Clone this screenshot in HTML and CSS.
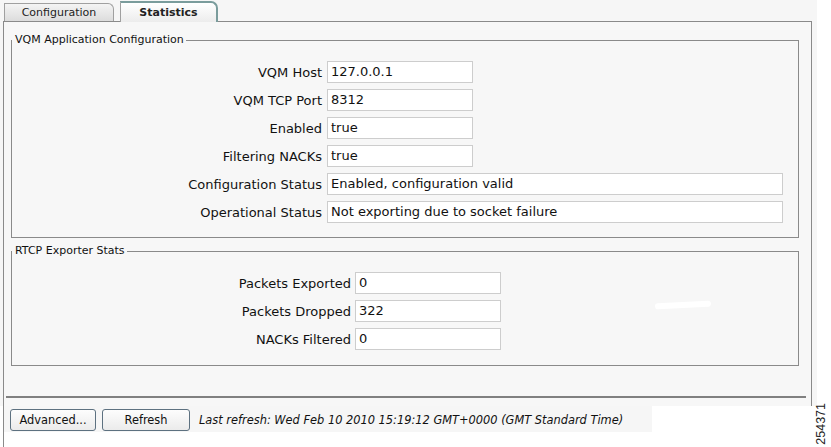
FILE: index.html
```
<!DOCTYPE html>
<html lang="en">
<head>
	<meta charset="UTF-8">
	<title>VQM Statistics</title>
	<link rel="stylesheet" href="styles.css">
</head>
<body>
	<div class="sheet">
		<div class="tabs">
			<div class="tab">Configuration</div>
			<div class="tab active">Statistics</div>
		</div>
		<div class="panel">
			<fieldset class="group vqm">
				<legend>VQM Application Configuration</legend>
				<div class="rows">
					<span class="lbl">VQM Host</span><span class="field">127.0.0.1</span>
					<span class="lbl">VQM TCP Port</span><span class="field">8312</span>
					<span class="lbl">Enabled</span><span class="field">true</span>
					<span class="lbl">Filtering NACKs</span><span class="field">true</span>
					<span class="lbl">Configuration Status</span><span class="field wide">Enabled, configuration valid</span>
					<span class="lbl">Operational Status</span><span class="field wide">Not exporting due to socket failure</span>
				</div>
			</fieldset>
			<fieldset class="group rtcp">
				<legend>RTCP Exporter Stats</legend>
				<div class="rows">
					<span class="lbl">Packets Exported</span><span class="field">0</span>
					<span class="lbl">Packets Dropped</span><span class="field">322</span>
					<span class="lbl">NACKs Filtered</span><span class="field">0</span>
				</div>
				<span class="smudge"></span>
			</fieldset>
			<div class="sep"></div>
		</div>
	</div>
	<div class="footer">
		<div class="bar">
			<button class="btn">Advanced...</button>
			<button class="btn">Refresh</button>
			<span class="last">Last refresh: Wed Feb 10 2010 15:19:12 GMT+0000 (GMT Standard Time)</span>
		</div>
	</div>
	<div class="figid">254371</div>
</body>
</html>
```

FILE: styles.css
```
*{
	margin: 0;
	padding: 0;
	box-sizing: border-box;
}
body{
	background: #fff;
	font-family: "DejaVu Sans", Verdana, sans-serif;
	font-size: 13px;
	color: #111;
	width: 831px;
	height: 447px;
	overflow: hidden;
	position: relative;
}
.sheet{
	background: #f6f6f6;
	width: 817px;
	height: 406px;
}
.tabs{
	display: flex;
	align-items: flex-end;
	height: 21px;
	padding-left: 4px;
	gap: 6px;
	font-size: 11px;
}
.tab{
	height: 18px;
	width: 110px;
	border: 1px solid #a0a0a0;
	border-bottom: none;
	border-top-right-radius: 6px;
	background: linear-gradient(#f4f4f4, #dcdcdc);
	text-align: center;
	line-height: 17px;
	color: #222;
}
.tab.active{
	width: 98px;
	height: 21px;
	border: 2px solid #7a9c9c;
	border-left: 1px solid #a0a0a0;
	border-bottom: none;
	border-top-right-radius: 7px;
	background: linear-gradient(#fff, #ececec);
	font-weight: bold;
	line-height: 19px;
	margin-bottom: -1px;
	position: relative;
}
.panel{
	margin-left: 3px;
	background: #f7f7f7;
	border-top: 1px solid #8a8a8a;
	border-left: 1px solid #8a8a8a;
	border-right: 1px solid #8a8a8a;
	width: 809px;
	height: 385px;
	padding: 11px 12px 0 7px;
}
.group{
	border: 1px solid #8a8a8a;
	position: relative;
	padding: 0;
}
.group legend{
	padding: 0 2px 0 3px;
	line-height: 14px;
	font-size: 11px;
	color: #111;
}
.rows{
	display: grid;
	row-gap: 6px;
	align-items: center;
}
.vqm .rows{
	grid-template-columns: 310px auto;
	column-gap: 5px;
	padding: 14px 0 14px;
}
.rtcp{
	margin-top: 6px;
}
.rtcp .rows{
	grid-template-columns: 339px auto;
	column-gap: 4px;
	padding: 14px 0 15px;
}
.lbl{
	text-align: right;
	white-space: nowrap;
}
.field{
	display: block;
	height: 22px;
	width: 146px;
	line-height: 20px;
	padding-left: 3px;
	background: #fff;
	border: 1px solid #cdcdcd;
	white-space: nowrap;
}
.field.wide{
	width: 456px;
}
.smudge{
	position: absolute;
	left: 643px;
	top: 44px;
	width: 56px;
	height: 6px;
	border-radius: 3px;
	background: #fff;
	transform: rotate(-3deg);
}
.sep{
	margin: 30px 0 0 -5px;
	width: 800px;
	height: 2px;
	background: #808080;
}
.footer{
	margin-left: 3px;
	border-left: 1px solid #8a8a8a;
	height: 41px;
}
.bar{
	background: #f6f6f6;
	width: 648px;
	height: 26px;
	padding: 1px 0 0 6px;
	display: flex;
	align-items: center;
	gap: 6px;
	font-size: 11.4px;
}
.btn{
	height: 22px;
	width: 86px;
	border: 1px solid #5d7180;
	border-radius: 3px;
	background: linear-gradient(#fdfdfd, #ebebeb);
	font-family: "DejaVu Sans", Verdana, sans-serif;
	font-size: 11.4px;
	color: #111;
}
.btn + .btn{
	width: 88px;
}
.last{
	font-style: italic;
	margin-left: 3px;
	white-space: nowrap;
}
.figid{
	position: absolute;
	right: 3px;
	bottom: 2px;
	writing-mode: vertical-rl;
	transform: rotate(180deg);
	font-family: "Liberation Sans", Arial, sans-serif;
	font-size: 12.5px;
	color: #222;
}
```
